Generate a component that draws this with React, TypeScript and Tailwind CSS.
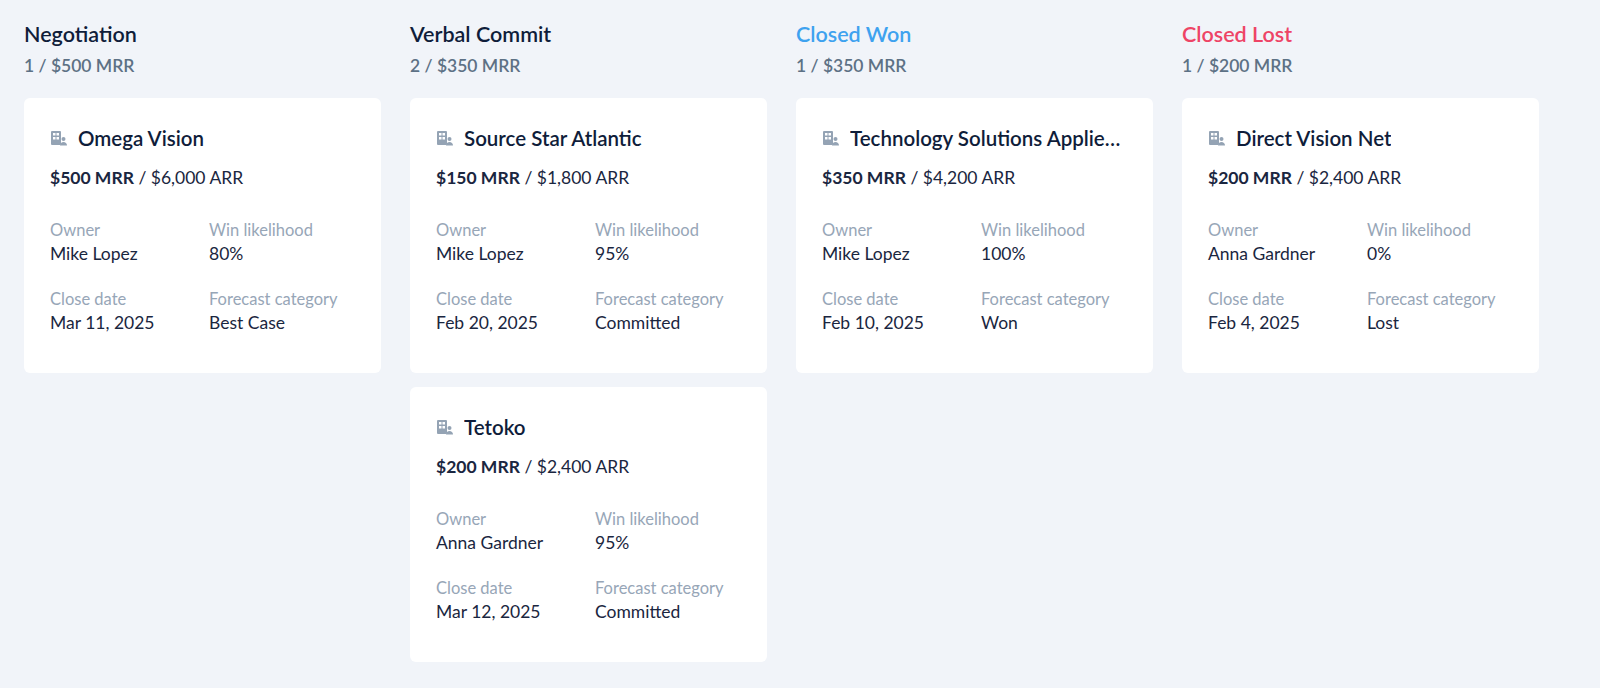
import React from "react";

type Deal = { name: string; mrr: string; arr: string; owner: string; win: string; close: string; cat: string };
type Col = { title: string; color: string; sub: string; deals: Deal[] };

const cols: Col[] = [
  { title: "Negotiation", color: "text-[#0f1d3a]", sub: "1 / $500 MRR", deals: [
    { name: "Omega Vision", mrr: "$500 MRR", arr: "$6,000 ARR", owner: "Mike Lopez", win: "80%", close: "Mar 11, 2025", cat: "Best Case" },
  ]},
  { title: "Verbal Commit", color: "text-[#0f1d3a]", sub: "2 / $350 MRR", deals: [
    { name: "Source Star Atlantic", mrr: "$150 MRR", arr: "$1,800 ARR", owner: "Mike Lopez", win: "95%", close: "Feb 20, 2025", cat: "Committed" },
    { name: "Tetoko", mrr: "$200 MRR", arr: "$2,400 ARR", owner: "Anna Gardner", win: "95%", close: "Mar 12, 2025", cat: "Committed" },
  ]},
  { title: "Closed Won", color: "text-[#3ea2ef]", sub: "1 / $350 MRR", deals: [
    { name: "Technology Solutions Applied Group", mrr: "$350 MRR", arr: "$4,200 ARR", owner: "Mike Lopez", win: "100%", close: "Feb 10, 2025", cat: "Won" },
  ]},
  { title: "Closed Lost", color: "text-[#ee4466]", sub: "1 / $200 MRR", deals: [
    { name: "Direct Vision Net", mrr: "$200 MRR", arr: "$2,400 ARR", owner: "Anna Gardner", win: "0%", close: "Feb 4, 2025", cat: "Lost" },
  ]},
];

function Icon() {
  return (
    <svg width="18" height="18" viewBox="0 0 18 18" className="shrink-0">
      <rect x="1" y="2" width="10" height="14" rx="1" fill="#94a3b4" />
      <rect x="3" y="4" width="2.5" height="2.5" fill="#fff" />
      <rect x="6.5" y="4" width="2.5" height="2.5" fill="#fff" />
      <rect x="3" y="8" width="2.5" height="2.5" fill="#fff" />
      <rect x="6.5" y="8" width="2.5" height="2.5" fill="#fff" />
      <circle cx="13.5" cy="10" r="2" fill="#94a3b4" />
      <path d="M10 16.5c0-2.2 1.6-3.5 3.5-3.5s3.5 1.3 3.5 3.5z" fill="#94a3b4" />
    </svg>
  );
}

function Field({ label, value }: { label: string; value: string }) {
  return (
    <div className="flex flex-col">
      <span className="text-[16.5px] leading-[24px] text-[#97a6b7]">{label}</span>
      <span className="text-[17.5px] leading-[24px] text-[#1a2640]">{value}</span>
    </div>
  );
}

function Card({ d }: { d: Deal }) {
  return (
    <div className="bg-white rounded-md px-[26px] pt-[26px] pb-[38px]">
      <div className="flex items-center gap-[10px]">
        <Icon />
        <span className="truncate text-[20.5px] leading-[28px] font-semibold text-[#0f1d3a]">{d.name}</span>
      </div>
      <div className="mt-[14px] text-[17.5px] leading-[24px] text-[#1a2640]">
        <span className="font-bold">{d.mrr}</span> / {d.arr}
      </div>
      <div className="mt-[28px] grid grid-cols-[159px_1fr] gap-y-[21px]">
        <Field label="Owner" value={d.owner} />
        <Field label="Win likelihood" value={d.win} />
        <Field label="Close date" value={d.close} />
        <Field label="Forecast category" value={d.cat} />
      </div>
    </div>
  );
}

export default function App() {
  return (
    <div className="min-h-[688px] bg-[#f1f4f9] pl-[24px] pt-[20px]" style={{ fontFamily: "Lato, 'Liberation Sans', sans-serif" }}>
      <div className="flex gap-[29px]">
        {cols.map((c) => (
          <div key={c.title} className="w-[357px] shrink-0 flex flex-col">
            <div className={`text-[21.5px] leading-[28px] font-semibold ${c.color}`}>{c.title}</div>
            <div className="mt-[6px] text-[17.5px] leading-[24px] font-semibold text-[#5d7185]">{c.sub}</div>
            <div className="mt-[20px] flex flex-col gap-[14px]">
              {c.deals.map((d) => <Card key={d.name} d={d} />)}
            </div>
          </div>
        ))}
      </div>
    </div>
  );
}
